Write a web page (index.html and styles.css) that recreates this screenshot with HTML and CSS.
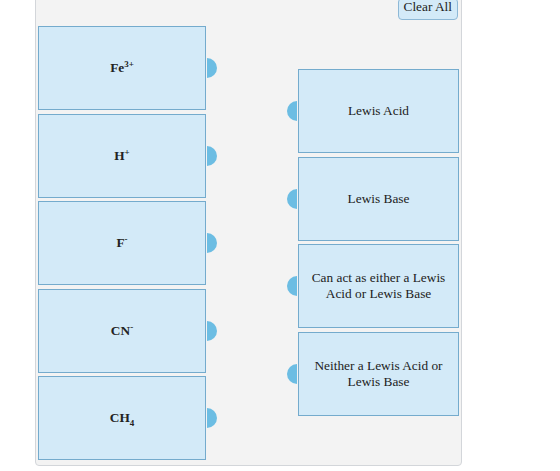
FILE: index.html
```html
<!DOCTYPE html>
<html lang="en">
<head>
<meta charset="utf-8">
<title>Match the species</title>
<link rel="stylesheet" href="styles.css">
</head>
<body>
<div class="panel">
  <div class="toolbar">
    <button class="clear-btn" type="button">Clear All</button>
  </div>
  <div class="board">
    <div class="column sources">
      <div class="tile source"><b>Fe<sup>3+</sup></b></div>
      <div class="tile source"><b>H<sup>+</sup></b></div>
      <div class="tile source"><b>F<sup>-</sup></b></div>
      <div class="tile source"><b>CN<sup>-</sup></b></div>
      <div class="tile source"><b>CH<sub>4</sub></b></div>
    </div>
    <div class="column targets">
      <div class="tile target">Lewis Acid</div>
      <div class="tile target">Lewis Base</div>
      <div class="tile target">Can act as either a Lewis Acid or Lewis Base</div>
      <div class="tile target">Neither a Lewis Acid or Lewis Base</div>
    </div>
  </div>
</div>
</body>
</html>
```
FILE: styles.css
```css
html, body {
  margin: 0;
  padding: 0;
  background: #ffffff;
}

body {
  font-family: "Liberation Serif", "Times New Roman", serif;
  color: #222;
}

.panel {
  box-sizing: border-box;
  width: 427px;
  margin: -10px 0 0 35px;
  padding: 0 2px 5px 2px;
  background: #f3f3f3;
  border: 1px solid #d3d6da;
  border-radius: 0 0 4px 4px;
}

.toolbar {
  display: flex;
  justify-content: flex-end;
  padding: 0 1px 0 0;
  height: 29px;
  align-items: flex-end;
}

.clear-btn {
  font-family: "Liberation Serif", "Times New Roman", serif;
  font-size: 13.33px;
  color: #222;
  background: #d3eaf8;
  border: 1px solid #8db8d6;
  border-radius: 4px;
  padding: 0 5px 4px;
  height: 22px;
  line-height: 16px;
  cursor: pointer;
}

.board {
  display: flex;
  justify-content: space-between;
  margin-top: 6px;
}

.column {
  display: flex;
  flex-direction: column;
  gap: 3.5px;
}

.targets {
  margin-top: 43px;
}

.tile {
  position: relative;
  box-sizing: border-box;
  height: 84px;
  display: flex;
  align-items: center;
  justify-content: center;
  text-align: center;
  background: #d3eaf8;
  border: 1px solid #74abcd;
  font-size: 13.33px;
  line-height: 16px;
}

.source {
  width: 168px;
}

.target {
  width: 161px;
  padding: 0 10px;
}

.source b {
  font-weight: bold;
  font-size: 13.33px;
}

sup, sub {
  font-size: 9px;
  line-height: 0;
}

/* half-round connector handles */
.tile::after {
  content: "";
  position: absolute;
  top: 50%;
  width: 10px;
  height: 20px;
  margin-top: -10px;
  background: #6cbde3;
}

.source::after {
  right: -12px;
  border-radius: 0 10px 10px 0;
}

.target::after {
  left: -12px;
  border-radius: 10px 0 0 10px;
}
```
